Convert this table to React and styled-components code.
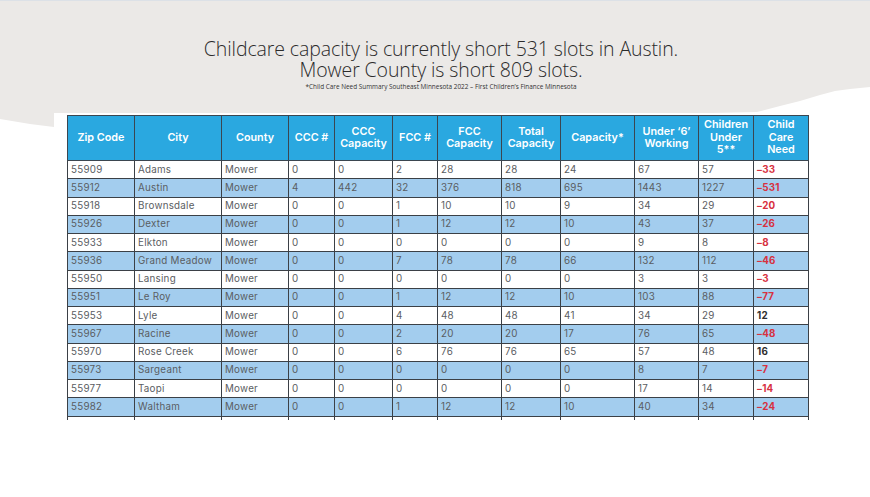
import React from 'react';
import styled, { createGlobalStyle } from 'styled-components';

const GlobalStyle = createGlobalStyle`
  html, body {
    margin: 0;
    background: #ffffff;
  }
  body {
    font-family: 'Open Sans', 'Liberation Sans', sans-serif;
  }
`;

const Page = styled.div`
  width: 870px;
  height: 497px;
  overflow: hidden;
  background: #ffffff;
`;

const Band = styled.header`
  height: 128px;
  box-sizing: border-box;
  padding: 37px 0 0 12px;
  background: #ebe9e7;
  border-top: 1px solid #dce1e7;
  text-align: center;
  clip-path: polygon(
    0 0, 100% 0, 100% 87px, 850px 89px, 835px 91px, 820px 95px,
    800px 101px, 780px 106px, 757px 112px, 400px 120px, 54px 127px,
    30px 124px, 0 119px
  );
`;

const Title = styled.h1`
  margin: 0;
  font-family: 'Open Sans', sans-serif;
  font-weight: 300;
  font-size: 19.5px;
  letter-spacing: -0.1px;
  line-height: 21px;
  color: #2b2b2b;
`;

const Note = styled.p`
  margin: 3px 0 0;
  font-family: 'Open Sans', sans-serif;
  font-size: 6.4px;
  line-height: 8px;
  color: #333;
`;

const Sheet = styled.section`
  position: relative;
  z-index: 1;
  width: 758px;
  height: 310px;
  box-sizing: border-box;
  margin: -15px 0 0 54px;
  padding: 2px 0 0 13px;
  background: #ffffff;
`;

const Table = styled.table`
  width: 741px;
  table-layout: fixed;
  border-collapse: collapse;
  font-family: Inter, 'Open Sans', sans-serif;
`;

const Head = styled.th`
  height: 44px;
  padding: 0 2px;
  background: #2aa8e0;
  border: 1px solid #3b4650;
  color: #ffffff;
  font-size: 10.8px;
  font-weight: 600;
  line-height: 12.5px;
  text-align: center;
  vertical-align: middle;
`;

const Row = styled.tr`
  height: 18.25px;
  background: ${(p) => (p.$blue ? '#a3cdee' : '#ffffff')};
`;

const Cell = styled.td`
  padding: 0 3px;
  border: 1px solid #3b4046;
  font-size: 9.8px;
  letter-spacing: 0.25px;
  line-height: 12px;
  color: ${(p) => (p.$need ? (p.$neg ? '#d7313f' : '#2e2e2e') : '#5a5d62')};
  font-weight: ${(p) => (p.$need ? 700 : 400)};
  white-space: nowrap;
  overflow: hidden;
`;

const StubRow = styled.tr`
  height: 4px;
`;

const Stub = styled.td`
  padding: 0;
  border-left: 1px solid #3b4046;
  border-right: 1px solid #3b4046;
`;

const widths = [67, 87, 67, 46, 58, 45, 64, 59, 74, 64, 55, 55];

const headers = [
  ['Zip Code'],
  ['City'],
  ['County'],
  ['CCC #'],
  ['CCC', 'Capacity'],
  ['FCC #'],
  ['FCC', 'Capacity'],
  ['Total', 'Capacity'],
  ['Capacity*'],
  ['Under ‘6’', 'Working'],
  ['Children', 'Under', '5**'],
  ['Child', 'Care', 'Need'],
];

const rows = [
  ['55909', 'Adams', 0, 0, 2, 28, 28, 24, 67, 57, -33],
  ['55912', 'Austin', 4, 442, 32, 376, 818, 695, 1443, 1227, -531],
  ['55918', 'Brownsdale', 0, 0, 1, 10, 10, 9, 34, 29, -20],
  ['55926', 'Dexter', 0, 0, 1, 12, 12, 10, 43, 37, -26],
  ['55933', 'Elkton', 0, 0, 0, 0, 0, 0, 9, 8, -8],
  ['55936', 'Grand Meadow', 0, 0, 7, 78, 78, 66, 132, 112, -46],
  ['55950', 'Lansing', 0, 0, 0, 0, 0, 0, 3, 3, -3],
  ['55951', 'Le Roy', 0, 0, 1, 12, 12, 10, 103, 88, -77],
  ['55953', 'Lyle', 0, 0, 4, 48, 48, 41, 34, 29, 12],
  ['55967', 'Racine', 0, 0, 2, 20, 20, 17, 76, 65, -48],
  ['55970', 'Rose Creek', 0, 0, 6, 76, 76, 65, 57, 48, 16],
  ['55973', 'Sargeant', 0, 0, 0, 0, 0, 0, 8, 7, -7],
  ['55977', 'Taopi', 0, 0, 0, 0, 0, 0, 17, 14, -14],
  ['55982', 'Waltham', 0, 0, 1, 12, 12, 10, 40, 34, -24],
];

const fmt = (n) => (n < 0 ? '–' + Math.abs(n) : String(n));

const App = () => {
  return (
    <>
      <GlobalStyle />
      <Page>
        <Band>
          <Title>
            Childcare capacity is currently short 531 slots in Austin.
            <br />
            Mower County is short 809 slots.
          </Title>
          <Note>*Child Care Need Summary Southeast Minnesota 2022 – First Children’s Finance Minnesota</Note>
        </Band>
        <Sheet>
          <Table>
            <colgroup>
              {widths.map((w, i) => (
                <col key={i} style={{ width: w }} />
              ))}
            </colgroup>
            <thead>
              <tr>
                {headers.map((lines, i) => (
                  <Head key={i}>
                    {lines.map((l, j) => (
                      <React.Fragment key={j}>
                        {j > 0 && <br />}
                        {l}
                      </React.Fragment>
                    ))}
                  </Head>
                ))}
              </tr>
            </thead>
            <tbody>
              {rows.map((r, i) => {
                const [zip, city, ...nums] = r;
                const need = nums[nums.length - 1];
                return (
                  <Row key={zip} $blue={i % 2 === 1}>
                    <Cell>{zip}</Cell>
                    <Cell>{city}</Cell>
                    <Cell>Mower</Cell>
                    {nums.slice(0, -1).map((n, j) => (
                      <Cell key={j}>{n}</Cell>
                    ))}
                    <Cell $need $neg={need < 0}>{fmt(need)}</Cell>
                  </Row>
                );
              })}
              <StubRow>
                {widths.map((w, i) => (
                  <Stub key={i} />
                ))}
              </StubRow>
            </tbody>
          </Table>
        </Sheet>
      </Page>
    </>
  );
};

export default App;
